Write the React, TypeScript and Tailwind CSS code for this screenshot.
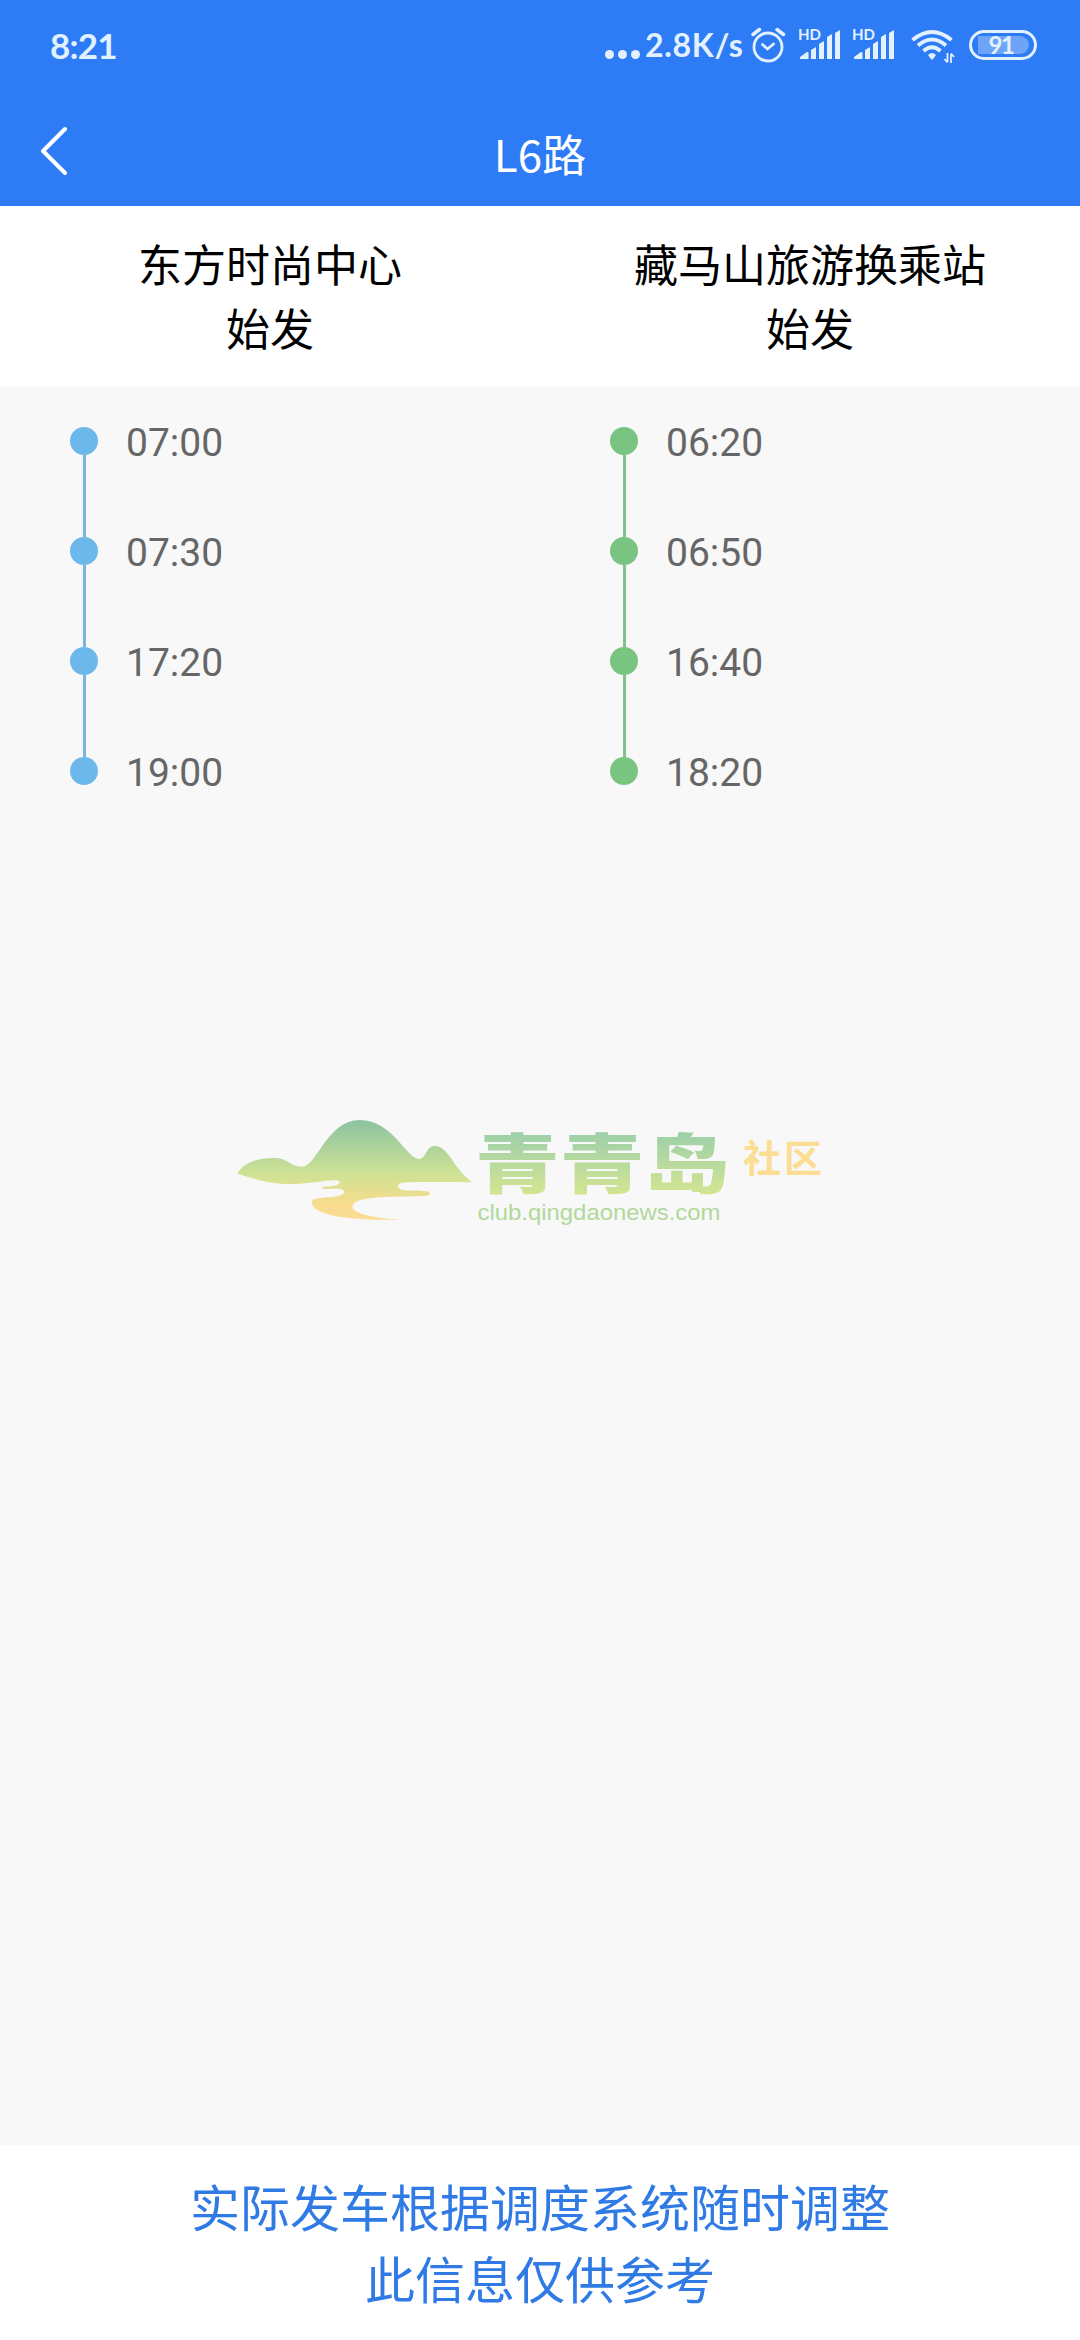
import React from "react";

interface Direction {
  station: string;
  times: string[];
  dot: string;
  line: string;
}

const directions: Direction[] = [
  {
    station: "东方时尚中心",
    times: ["07:00", "07:30", "17:20", "19:00"],
    dot: "bg-[#6db8eb]",
    line: "bg-[#7ab5dc]",
  },
  {
    station: "藏马山旅游换乘站",
    times: ["06:20", "06:50", "16:40", "18:20"],
    dot: "bg-[#79c481]",
    line: "bg-[#82c08d]",
  },
];

const Signal: React.FC = () => (
  <svg width="42" height="40" viewBox="0 0 42 40" fill="#e3f1ff">
    <text
      x="-1"
      y="14"
      fontSize="15"
      fontWeight="700"
      fontFamily="Lato, sans-serif"
      textLength="23"
    >
      HD
    </text>
    <path d="M1 33v-2l7-5q1.500-.5 1.500 1v6zM12 33V24l5-3v12zM20 33V18l5-3v18zM28 33V11l5-3v25zM36 33V7l5-3v29z" />
  </svg>
);

const StatusBar: React.FC = () => (
  <div className="flex h-[88px] items-start pt-[26px] text-[#e3f1ff]">
    <span className="-mt-px ml-[50px] w-[555px] font-[Lato] text-[35px] leading-[40px] font-bold tracking-[-0.8px]">
      8:21
    </span>
    <svg width="36" height="40" viewBox="0 0 36 40" fill="currentColor">
      <circle cx="4.500" cy="28.500" r="4.500" />
      <circle cx="17.500" cy="28.500" r="4.500" />
      <circle cx="30.500" cy="28.500" r="4.500" />
    </svg>
    <span className="-mt-px ml-1 w-[106px] font-[Lato] text-[32px] leading-[40px] font-bold tracking-[0.7px] whitespace-nowrap">
      2.8K/s
    </span>
    <svg
      width="36"
      height="40"
      viewBox="0 0 36 40"
      fill="none"
      stroke="currentColor"
      strokeWidth="2.800"
      strokeLinecap="round"
    >
      <circle cx="17" cy="21" r="14" />
      <path d="M11.500 18.500l5 4.500 6-5" />
      <path d="M2 8.500l6.500-5M32.500 8.500l-6.500-5" strokeWidth="3.500" />
    </svg>
    <div className="ml-3 flex gap-3">
      <Signal />
      <Signal />
    </div>
    <svg className="ml-[16px]" width="44" height="40" viewBox="0 0 44 40">
      <g fill="none" stroke="currentColor" strokeWidth="4">
        <path d="M1.500 14q19.500-16 39 0" />
        <path d="M7 19.500q14-12 28 0" />
        <path d="M12.500 25q8.500-7.500 17 0" />
      </g>
      <path
        d="M17 29q4-4 8 0l-3 4q-1 1-2 0z"
        fill="currentColor"
      />
      <path
        d="M36.500 27v9M40 37v-9M36.500 36.500l-3-3.500M40 27.500l3 3.500"
        fill="none"
        stroke="currentColor"
        strokeWidth="1.800"
      />
    </svg>
    <div className="mt-[4px] ml-[14px] flex h-[30px] w-[68px] items-center justify-center rounded-full border-[3px] border-[#e3f1ff]">
      <div className="flex h-[18px] w-[51px] items-center justify-center rounded-l-xs rounded-r-full bg-[#6ea4f8] pr-[4px] font-[Lato] text-[24px] leading-none font-bold tracking-[-1.5px]">
        91
      </div>
    </div>
  </div>
);

const Timeline: React.FC<{ direction: Direction }> = ({ direction }) => (
  <ul className="flex-1 pl-[70px]">
    {direction.times.map((time, i) => (
      <li key={time} className="flex h-[110px]">
        <div className="flex w-7 flex-col items-center">
          <span className={`size-7 shrink-0 rounded-full ${direction.dot}`} />
          {i < direction.times.length - 1 && (
            <span className={`w-[3px] flex-1 ${direction.line}`} />
          )}
        </div>
        <span className="ml-7 h-7 font-[Roboto] text-[39px] leading-[33px] text-[#666]">
          {time}
        </span>
      </li>
    ))}
  </ul>
);

const Watermark: React.FC = () => (
  <svg
    className="absolute top-[714px] left-[220px]"
    width="640"
    height="140"
    viewBox="0 0 640 140"
  >
    <defs>
      <linearGradient id="hill" x1="0" y1="20" x2="0" y2="120" gradientUnits="userSpaceOnUse">
        <stop offset="0" stopColor="#8bc3a0" />
        <stop offset="0.550" stopColor="#d0e294" />
        <stop offset="0.850" stopColor="#f8dc8e" />
        <stop offset="1" stopColor="#fbdc94" />
      </linearGradient>
      <linearGradient id="name" x1="0" y1="-54" x2="0" y2="6" gradientUnits="userSpaceOnUse">
        <stop offset="0" stopColor="#9ed0a9" />
        <stop offset="1" stopColor="#d3e592" />
      </linearGradient>
    </defs>
    <path
      fill="url(#hill)"
      d="M17 73.700C25 61 40 58 54 58C68 58 70 66.700 82 66.700C97 66.700 107 20 140 20C172 20 187 59 199 59C206 59 206 46 214.500 46C229 46 231 66 252 82.300C232 82 210 82 190 82.200C182 82.300 178 83.500 178 86C178 89 182 90.500 190 90.500C200 90.500 210 90.500 210 93.500C210 96.500 203 96 195 96.300C165 97 132.500 97 132.500 106.500C132.500 114 155 118 180 119.700C130 120.500 91.700 116 91.700 101.500C91.700 96 124 99 124 92C124 86 102 91 102 87.700C102 85.500 119.500 88 119.500 82C119.500 77 95 84 68 84C48 84 32 78 17 73.700Z"
    />
    <text
      transform="translate(255 88) scale(1.315 1)"
      fontSize="64.500"
      fontWeight="900"
      fontFamily="'Noto Sans CJK SC', sans-serif"
      fill="url(#name)"
    >
      青青岛
    </text>
    <text
      x="257.500"
      y="120"
      fontSize="21.500"
      fontFamily="'Liberation Sans', sans-serif"
      fill="#b0d99b"
      textLength="243"
      lengthAdjust="spacingAndGlyphs"
    >
      club.qingdaonews.com
    </text>
    <text
      x="523"
      y="72"
      fontSize="38"
      fontWeight="700"
      fontFamily="'Noto Sans CJK SC', sans-serif"
      fill="#fbdd93"
      textLength="79"
    >
      社区
    </text>
  </svg>
);

const App: React.FC = () => {
  return (
    <div className="flex h-[2340px] w-[1080px] flex-col bg-[#f8f8f8] font-['Noto_Sans_CJK_SC',sans-serif]">
      <header className="h-[206px] bg-[#2d7cf6]">
        <StatusBar />
        <div className="grid h-[118px] grid-cols-[1fr_auto_1fr] items-center px-10 text-white">
          <svg
            className="mt-[4px]"
            width="30"
            height="52"
            viewBox="0 0 30 52"
            fill="none"
            stroke="currentColor"
            strokeWidth="4"
            strokeLinecap="round"
            strokeLinejoin="round"
          >
            <path d="M25 6L3 28l22 22" />
          </svg>
          <h1 className="pt-3 text-[44px] leading-[64px]">L6路</h1>
        </div>
      </header>

      <div className="grid h-[180px] grid-cols-2 bg-white pt-[25px] text-center text-[44px] leading-[64px] text-black">
        {directions.map((d) => (
          <div key={d.station}>
            <p>{d.station}</p>
            <p>始发</p>
          </div>
        ))}
      </div>

      <main className="relative flex flex-1 pt-[41px]">
        {directions.map((d) => (
          <Timeline key={d.station} direction={d} />
        ))}
        <Watermark />
      </main>

      <footer className="h-[195px] bg-white pt-[24px] text-center text-[50px] leading-[72px] text-[#2f7ae5]">
        <p>实际发车根据调度系统随时调整</p>
        <p>此信息仅供参考</p>
      </footer>
    </div>
  );
};

export default App;
